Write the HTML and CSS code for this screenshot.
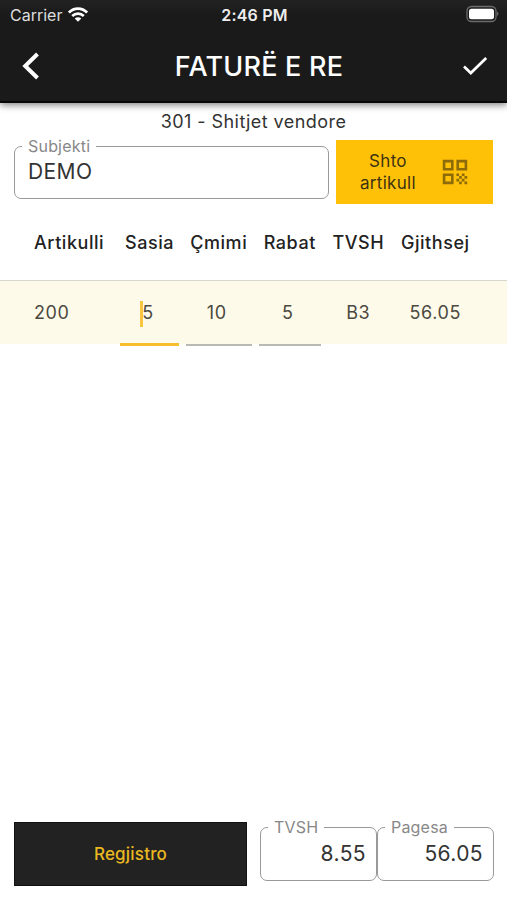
FILE: index.html
```html
<!DOCTYPE html>
<html lang="sq">
<head>
    <meta charset="UTF-8">
    <title>Faturë e re</title>
    <link rel="stylesheet" href="styles.css">
</head>
<body>
    <div class="screen">
        <!-- Header -->
        <header class="header">
            <div class="statusbar">
                <div class="carrier">
                    <span>Carrier</span>
                    <svg class="wifi" viewBox="0 0 20 15" fill="none" stroke="#fff" stroke-width="2.7">
                        <path d="M0.9 5.6C6 .3 14 .3 19.100 5.600M4.200 9C7.600 5.700 12.400 5.700 15.800 9"/>
                        <path d="M10 14.800L6.700 11.500C8.600 9.700 11.400 9.700 13.300 11.500Z" fill="#fff" stroke="none"/>
                    </svg>
                </div>
                <span class="clock">2:46 PM</span>
                <svg class="battery" viewBox="0 0 34 18">
                    <rect x="2" y="1.500" width="29" height="15" rx="4.500" fill="none" stroke="#6b6b6b" stroke-width="1.300"/>
                    <rect x="4" y="3.700" width="25" height="10.600" rx="2.500" fill="#fff"/>
                    <path d="M32.200 6.500C33.900 7.200 33.900 10.300 32.200 11Z" fill="#777"/>
                </svg>
            </div>
            <div class="navbar">
                <svg class="back" viewBox="0 0 18 28" fill="none" stroke="#fff" stroke-width="4">
                    <path d="M15.500 2L3.200 14L15.500 26"/>
                </svg>
                <h1 class="title">FATURË E RE</h1>
                <svg class="check" viewBox="0 0 26 20" fill="none" stroke="#fff" stroke-width="2.700">
                    <path d="M2 10.500L8.800 17L24.200 2"/>
                </svg>
            </div>
        </header>

        <!-- Subject -->
        <p class="subtitle">301 - Shitjet vendore</p>
        <div class="subject-row">
            <fieldset class="field subject">
                <legend>Subjekti</legend>
                <span>DEMO</span>
            </fieldset>
            <button class="add-btn">
                <span class="add-label">Shto<br>artikull</span>
                <svg class="qr" viewBox="0 0 26 26">
                    <g fill="none" stroke="currentColor" stroke-width="2.600">
                        <path d="M2.100 2.100h8.200v8.200h-8.200zM15.700 2.100h8.200v8.200h-8.200zM2.100 15.700h8.200v8.200h-8.200z"/>
                    </g>
                    <path fill="currentColor" d="M14.400 14.400h2.700v2.700h-2.700zM19.800 14.400h2.700v2.700h-2.700zM17.100 17.100h2.700v2.700h-2.700zM22.500 17.100h2.700v2.700h-2.700zM14.400 19.800h2.700v2.700h-2.700zM19.800 19.800h2.700v2.700h-2.700zM17.100 22.500h2.700v2.700h-2.700zM22.500 22.500h2.700v2.700h-2.700z"/>
                </svg>
            </button>
        </div>

        <!-- Items -->
        <div class="items">
            <div class="row head">
                <span class="left">Artikulli</span>
                <span>Sasia</span>
                <span>Çmimi</span>
                <span>Rabat</span>
                <span>TVSH</span>
                <span>Gjithsej</span>
            </div>
            <div class="row item">
                <span class="left">200</span>
                <span class="edit active"><i class="caret"></i>5</span>
                <span class="edit">10</span>
                <span class="edit">5</span>
                <span>B3</span>
                <span>56.05</span>
            </div>
        </div>

        <!-- Totals -->
        <footer class="footer">
            <button class="save-btn">Regjistro</button>
            <fieldset class="field total">
                <legend>TVSH</legend>
                <span>8.55</span>
            </fieldset>
            <fieldset class="field total">
                <legend>Pagesa</legend>
                <span>56.05</span>
            </fieldset>
        </footer>
    </div>
</body>
</html>
```
FILE: styles.css
```css
* {
    box-sizing: border-box;
}

body {
    margin: 0;
    background: #fff;
    color: #333;
    font-family: Inter, "Liberation Sans", sans-serif;
}

.screen {
    height: 900px;
    display: flex;
    flex-direction: column;
    overflow: hidden;
}

.header {
    flex: none;
    height: 103px;
    background: linear-gradient(#222, #1a1a1a 14px);
    border-bottom: 2px solid #080808;
    box-shadow: 0 2px 7px rgba(0, 0, 0, 0.5);
    color: #fff;
}

.statusbar {
    height: 30px;
    padding: 0 8px 0 10px;
    display: grid;
    grid-template-columns: 1fr auto 1fr;
    align-items: center;
}

.carrier {
    display: flex;
    align-items: center;
    gap: 6px;
    font-size: 16px;
    color: #ddd;
}

.wifi {
    width: 20px;
    height: 15px;
    margin-top: -2px;
}

.clock {
    font-size: 16px;
    font-weight: 600;
    letter-spacing: 0.2px;
    color: #eee;
}

.battery {
    width: 34px;
    height: 18px;
    margin-top: -2px;
    justify-self: end;
}

.navbar {
    height: 72px;
    padding: 0 19px 0 22px;
    display: flex;
    align-items: center;
    justify-content: space-between;
}

.back {
    width: 18px;
    height: 28px;
}

.title {
    margin: 0 0 0 16px;
    font-size: 27px;
    font-weight: 500;
    letter-spacing: 0.2px;
}

.check {
    width: 26px;
    height: 20px;
}

.subtitle {
    margin: 7px 0 0;
    text-align: center;
    font-size: 18px;
    line-height: 23px;
    letter-spacing: 0.45px;
}

.subject-row {
    display: flex;
    gap: 7px;
    padding: 7px 14px 0;
}

.field {
    min-width: 0;
    margin: 0;
    border: 1px solid #999;
    border-radius: 7px;
    font-size: 21px;
    letter-spacing: 0.4px;
}

.field legend {
    padding: 0 6px;
    color: #888;
    font-size: 16px;
    line-height: 13px;
    letter-spacing: 0.2px;
    text-align: left;
}

.subject {
    width: 315px;
    height: 59px;
    padding: 4px 12px 0 7px;
}

.subject span {
    display: block;
    padding-left: 6px;
    line-height: 29px;
}

.add-btn {
    flex: 1;
    height: 64px;
    padding: 0 25px 0 24px;
    display: flex;
    align-items: center;
    justify-content: space-between;
    border: 0;
    background: #ffc107;
    color: #3d3212;
    font: 17px/22px Inter, "Liberation Sans", sans-serif;
    letter-spacing: 0.3px;
}

.qr {
    width: 26px;
    height: 26px;
    color: #8c6b08;
}

.row {
    display: grid;
    grid-template-columns: 79.5px 59px 66.5px 62.5px 61.5px 79.5px;
    column-gap: 6.5px;
    padding-left: 34px;
    text-align: center;
    font-size: 18px;
    letter-spacing: 0.55px;
    white-space: nowrap;
}

.row .left {
    text-align: left;
}

.head {
    height: 77px;
    line-height: 77px;
    border-bottom: 1px solid #d6d6d0;
    font-weight: 500;
    color: #222;
}

.item {
    height: 65px;
    line-height: 63px;
    background: linear-gradient(#fefaea 63px, #fff 63px);
    color: #4b4940;
}

.edit {
    height: 65px;
    padding-right: 4px;
    border-bottom: 2px solid #b9b8b2;
}

.edit.active {
    padding-right: 5px;
    border-bottom: 3px solid #f6bd2d;
}

.caret {
    display: inline-block;
    width: 3px;
    height: 26px;
    margin-right: -1px;
    background: #f9c440;
    vertical-align: middle;
}

.footer {
    margin-top: auto;
    padding: 0 13px 14px 14px;
    display: flex;
    align-items: flex-end;
}

.save-btn {
    width: 233px;
    height: 64px;
    margin-right: 13px;
    padding: 0;
    border: 1px solid #111;
    background: #222;
    color: #eab820;
    font: 500 17px Inter, "Liberation Sans", sans-serif;
    letter-spacing: 0.2px;
}

.total {
    width: 117px;
    height: 60px;
    margin-bottom: 5px;
    padding: 4px 10px 0 7px;
    text-align: right;
}

.total span {
    display: block;
    line-height: 31px;
}
```
